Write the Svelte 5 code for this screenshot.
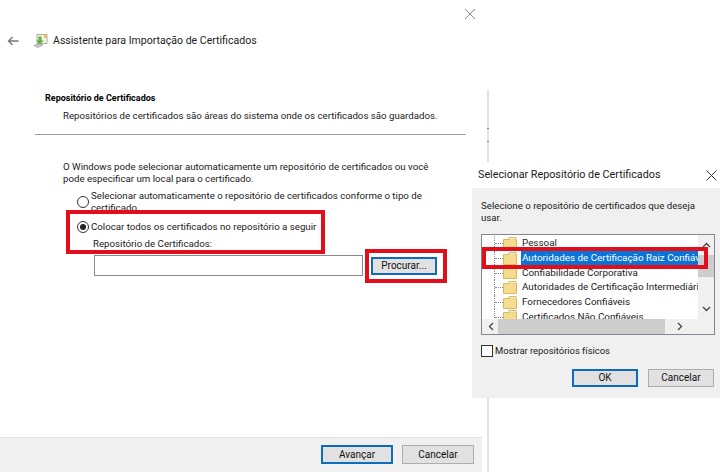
<script>
  const stores = [
    { name: 'Pessoal' },
    { name: 'Autoridades de Certificação Raiz Confiáveis', selected: true },
    { name: 'Confiabilidade Corporativa' },
    { name: 'Autoridades de Certificação Intermediárias' },
    { name: 'Fornecedores Confiáveis' },
    { name: 'Certificados Não Confiáveis' }
  ];
</script>

<div class="screen">
  <div class="wizard">
    <div class="close-row">
      <svg width="12" height="12" viewBox="0 0 12 12"><path d="M1 1l10 10M11 1L1 11" stroke="#8a8a8a" fill="none" /></svg>
    </div>
    <header class="title-row">
      <svg class="back" width="12" height="10" viewBox="0 0 12 10"><path d="M11.5 5H1.5M5.5 1L1.5 5l4 4" stroke="#777" stroke-width="1.4" fill="none" /></svg>
      <svg class="cert" width="16" height="16" viewBox="0 0 16 16">
        <path d="M4 1.5h10v9H4z" fill="#f3f3ea" stroke="#9a9a8c" stroke-width=".8" />
        <path d="M11 2h3v3h-3z" fill="#e4c45c" />
        <path d="M1 12.5l5-2 4 1.5-5 2.5z" fill="#c9c9c9" stroke="#8d8d8d" stroke-width=".6" />
        <path d="M8.5 3.5v4H11L6.5 11 3 7.5h2.5v-4z" fill="#5fae3c" />
      </svg>
      <span class="title">Assistente para Importação de Certificados</span>
    </header>

    <section class="head">
      <h2>Repositório de Certificados</h2>
      <p>Repositórios de certificados são áreas do sistema onde os certificados são guardados.</p>
    </section>

    <section class="body">
      <p class="intro">O Windows pode selecionar automaticamente um repositório de certificados ou você pode especificar um local para o certificado.</p>
      <div class="radio-row first">
        <span class="radio"></span>
        <span class="radio-text">Selecionar automaticamente o repositório de certificados conforme o tipo de certificado</span>
      </div>
      <div class="radio-row second">
        <span class="radio on"></span>
        <span class="radio-text">Colocar todos os certificados no repositório a seguir</span>
      </div>
      <div class="field-label">Repositório de Certificados:</div>
      <div class="field-row">
        <div class="input"></div>
        <button class="btn default browse">Procurar...</button>
      </div>
    </section>

    <footer>
      <button class="btn default wide">Avançar</button>
      <button class="btn wide">Cancelar</button>
    </footer>
  </div>
  <div class="wizard-edge"></div>

  <div class="dialog">
    <div class="dialog-title">
      <span>Selecionar Repositório de Certificados</span>
      <svg width="11" height="11" viewBox="0 0 11 11"><path d="M.5.5l10 10M10.5.5l-10 10" stroke="#333" fill="none" /></svg>
    </div>
    <div class="dialog-body">
      <p>Selecione o repositório de certificados que deseja usar.</p>
      <div class="tree">
        <div class="tree-rows">
          {#each stores as s}
            <div class="tree-row">
              <span class="dots"></span>
              <svg width="14" height="13" viewBox="0 0 14 13">
                <path d="M.5 2.5h13v10H.5z" fill="#f6dd8e" stroke="#d8b860" />
                <path d="M6 2.5V.5h7v2" fill="#fbf3cf" stroke="#d8b860" />
              </svg>
              <span class="tree-name" class:selected={s.selected}>{s.name}</span>
            </div>
          {/each}
        </div>
        <div class="vbar">
          <svg width="9" height="6" viewBox="0 0 9 6"><path d="M1 5l3.5-3.5L8 5" stroke="#444" stroke-width="1.3" fill="none" /></svg>
          <div class="vthumb"></div>
          <svg width="9" height="6" viewBox="0 0 9 6"><path d="M1 1l3.5 3.5L8 1" stroke="#444" stroke-width="1.3" fill="none" /></svg>
        </div>
        <div class="hbar">
          <svg width="6" height="9" viewBox="0 0 6 9"><path d="M5 1L1.5 4.5 5 8" stroke="#444" stroke-width="1.3" fill="none" /></svg>
          <div class="hthumb"></div>
          <svg width="6" height="9" viewBox="0 0 6 9"><path d="M1 1l3.5 3.5L1 8" stroke="#444" stroke-width="1.3" fill="none" /></svg>
        </div>
      </div>
      <label class="check"><span class="box"></span>Mostrar repositórios físicos</label>
      <div class="dialog-actions">
        <button class="btn default ok">OK</button>
        <button class="btn ok">Cancelar</button>
      </div>
    </div>
  </div>

  <div class="mark mark-radio"></div>
  <div class="mark mark-browse"></div>
  <div class="mark mark-store"></div>
</div>

<style>
  :global(body) {
    margin: 0;
    background: #fff;
  }

  .screen {
    position: relative;
    width: 720px;
    height: 472px;
    overflow: hidden;
    background: #fff;
    color: #1a1a1a;
    font-family: Roboto, "Noto Sans", sans-serif;
    font-size: 9.7px;
    line-height: 12px;
  }

  .wizard {
    width: 482px;
    height: 472px;
    display: flex;
    flex-direction: column;
  }

  .wizard-edge {
    position: absolute;
    left: 487px;
    top: 90px;
    bottom: 0;
    width: 2px;
    background: linear-gradient(#e4e4e4 38px, #8c8c8c 38px 39px, #e4e4e4 39px 51px, #8c8c8c 51px 52px, #e4e4e4 52px);
  }

  .close-row {
    height: 19px;
    padding: 8px 0 0 464px;
    box-sizing: border-box;
  }

  .title-row {
    height: 32px;
    display: flex;
    align-items: center;
    padding-left: 7px;
    padding-top: 11px;
    box-sizing: border-box;
  }

  .back {
    margin-right: 14px;
  }

  .cert {
    margin-right: 4px;
  }

  .title {
    font-size: 10.55px;
    color: #222;
  }

  .head {
    margin: 41px 16px 0 35px;
    height: 42px;
    border-bottom: 1px solid #a0a0a0;
  }

  .head h2 {
    margin: 0 0 0 10px;
    font-size: 9px;
    line-height: 12px;
    font-weight: 700;
    color: #000;
  }

  .head p {
    margin: 6px 0 0 28px;
    white-space: nowrap;
  }

  .body {
    flex: 1;
    padding: 26px 16px 0 63px;
  }

  .intro {
    margin: 0;
    width: 375px;
  }

  .radio-row {
    display: flex;
    align-items: center;
    margin-left: 14px;
  }

  .radio-row.first {
    margin-top: 5px;
    width: 370px;
  }

  .radio-row.second {
    margin-top: 7px;
  }

  .radio {
    flex: none;
    width: 12px;
    height: 12px;
    border: 1px solid #333;
    border-radius: 50%;
    background: #fff;
    box-sizing: border-box;
    margin-right: 2px;
    position: relative;
  }

  .radio.on::after {
    content: "";
    position: absolute;
    inset: 2px;
    border-radius: 50%;
    background: #222;
  }

  .field-label {
    margin: 5px 0 0 30px;
  }

  .field-row {
    display: flex;
    align-items: center;
    margin: 5px 0 0 31px;
  }

  .input {
    width: 269px;
    height: 21px;
    box-sizing: border-box;
    border: 1px solid #8a8a8a;
    background: #fff;
  }

  .btn {
    font: inherit;
    font-size: 10px;
    color: #111;
    background: #e1e1e1;
    border: 1px solid #adadad;
    padding: 0;
    box-sizing: border-box;
  }

  .btn.default {
    border: 2px solid #0f6cbd;
  }

  .browse {
    width: 66px;
    height: 18px;
    margin-left: 8px;
  }

  footer {
    height: 35px;
    background: #f0f0f0;
    border-top: 1px solid #dfdfdf;
    box-sizing: border-box;
    display: flex;
    gap: 9px;
    justify-content: flex-end;
    padding: 7px 8px 0 0;
    width: 482px;
  }

  .wide {
    width: 72px;
    height: 19px;
  }

  .dialog {
    position: absolute;
    left: 472px;
    top: 162px;
    width: 248px;
    height: 236px;
    background: #fff;
    display: flex;
    flex-direction: column;
  }

  .dialog-title {
    height: 26px;
    display: flex;
    align-items: center;
    justify-content: space-between;
    padding: 0 3px 0 6px;
    font-size: 10.75px;
  }

  .dialog-body {
    flex: 1;
    background: #f0f0f0;
    padding: 12px 5px 0 9px;
  }

  .dialog-body p {
    margin: 0;
    width: 230px;
  }

  .tree {
    position: relative;
    margin-top: 10px;
    height: 101px;
    box-sizing: border-box;
    border: 1px solid #828790;
    background: #fff;
    overflow: hidden;
  }

  .tree-rows {
    width: 217px;
    overflow: hidden;
    margin-top: 1px;
    font-size: 9.85px;
  }

  .tree-row {
    height: 14.7px;
    display: flex;
    align-items: center;
    white-space: nowrap;
    padding-left: 12px;
  }

  .dots {
    flex: none;
    align-self: stretch;
    width: 8px;
    border-left: 1px dotted #888;
    position: relative;
  }

  .dots::after {
    content: "";
    position: absolute;
    left: 0;
    right: 0;
    top: 50%;
    border-top: 1px dotted #888;
  }

  .tree-row svg {
    flex: none;
  }

  .tree-name {
    margin-left: 4px;
    padding: 0 1px;
    line-height: 14px;
  }

  .tree-name.selected {
    background: #0a74d6;
    color: #fff;
  }

  .vbar {
    position: absolute;
    right: 0;
    top: 0;
    bottom: 0;
    width: 16px;
    background: #f0f0f0;
    display: flex;
    flex-direction: column;
    align-items: center;
    justify-content: space-between;
    padding: 7px 0 22px;
    box-sizing: border-box;
  }

  .vthumb {
    position: absolute;
    left: 0;
    right: 0;
    top: 20px;
    height: 22px;
    background: #cdcdcd;
  }

  .hbar {
    position: absolute;
    left: 0;
    right: 0;
    bottom: 0;
    height: 15px;
    background: #f0f0f0;
    display: flex;
    align-items: center;
    justify-content: space-between;
    padding: 0 31px 0 6px;
  }

  .hthumb {
    position: absolute;
    left: 16px;
    top: 0;
    bottom: 0;
    width: 167px;
    background: #cdcdcd;
  }

  .check {
    display: flex;
    align-items: center;
    margin-top: 10px;
    font-size: 9.4px;
  }

  .box {
    width: 12px;
    height: 12px;
    box-sizing: border-box;
    border: 1px solid #333;
    background: #fff;
    margin-right: 2px;
  }

  .dialog-actions {
    display: flex;
    gap: 10px;
    justify-content: flex-end;
    margin-top: 12px;
    padding-right: 1px;
  }

  .ok {
    width: 66px;
    height: 18px;
  }

  .mark {
    position: absolute;
    box-sizing: border-box;
    border: 4px solid #e30e1c;
  }

  .mark-radio {
    left: 66px;
    top: 210px;
    width: 259px;
    height: 44px;
  }

  .mark-browse {
    left: 365px;
    top: 249px;
    width: 82px;
    height: 34px;
  }

  .mark-store {
    left: 482px;
    top: 247px;
    width: 226px;
    height: 22px;
  }
</style>
